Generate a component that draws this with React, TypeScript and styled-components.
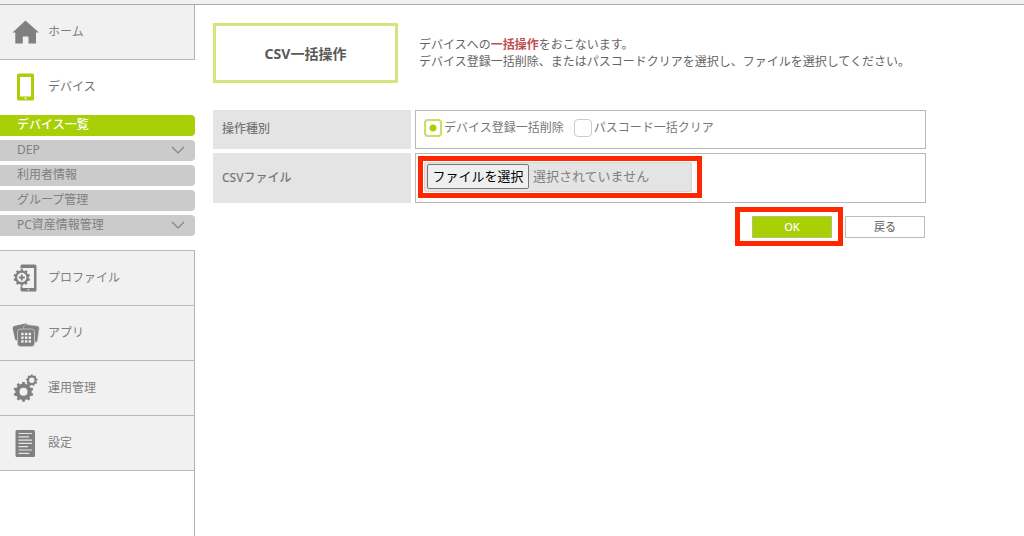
import React from 'react';
import styled, { createGlobalStyle } from 'styled-components';

const GlobalStyle = createGlobalStyle`
  * { box-sizing: border-box; }
  body {
    margin: 0;
    background: #fff;
    color: #777;
    font-family: "Noto Sans", "Noto Sans CJK JP", sans-serif;
    font-size: 12px;
  }
  button, input { font-family: inherit; }
`;

const Page = styled.div`
  display: flex;
  flex-direction: column;
  min-height: 100vh;
`;

const TopBar = styled.header`
  height: 5px;
  background: #f1f1f1;
  border-bottom: 1px solid #aaa;
`;

const Body = styled.div`
  display: flex;
  flex: 1;
`;

const Sidebar = styled.nav`
  display: flex;
  flex-direction: column;
  flex: 0 0 195px;
`;

const SidebarRest = styled.div`
  flex: 1;
  border-right: 1px solid #b0b0b0;
`;

const NavItem = styled.a<{ $open?: boolean }>`
  display: flex;
  align-items: center;
  gap: 8px;
  height: 55px;
  padding-left: 12px;
  color: ${(p) => (p.$open ? '#707070' : '#808080')};
  background: ${(p) => (p.$open ? '#fff' : '#f1f1f1')};
  border-right: 1px solid ${(p) => (p.$open ? 'transparent' : '#b0b0b0')};
  border-bottom: 1px solid ${(p) => (p.$open ? 'transparent' : '#b8b8b8')};
  text-decoration: none;
`;

const NavLabel = styled.span`
  padding-bottom: 1px;
  line-height: 18px;
`;

const NavGroup = styled.div`
  border-top: 1px solid #b8b8b8;
`;

const SubMenu = styled.ul`
  display: flex;
  flex-direction: column;
  gap: 4px;
  margin: 0 0 14px;
  padding: 0;
  list-style: none;
`;

const SubLink = styled.a<{ $active?: boolean }>`
  display: flex;
  align-items: center;
  justify-content: space-between;
  height: 21px;
  padding: 0 10px 2px 17px;
  border-radius: 0 4px 4px 0;
  color: ${(p) => (p.$active ? '#fff' : '#808080')};
  background: ${(p) => (p.$active ? '#a9cf06' : '#cbcbcb')};
  font-weight: ${(p) => (p.$active ? 500 : 400)};
  line-height: 18px;
  text-decoration: none;
`;

const Main = styled.main`
  flex: 1;
  min-width: 0;
  padding: 18px 98px 24px 18px;
`;

const Intro = styled.div`
  display: flex;
  gap: 21px;
  margin-bottom: 27px;
`;

const Title = styled.h1`
  display: flex;
  align-items: center;
  justify-content: center;
  flex: 0 0 185px;
  height: 60px;
  margin: 0;
  border: 3px solid #d4e57e;
  color: #595959;
  font-size: 14px;
  font-weight: 700;
`;

const Description = styled.p`
  margin: 0;
  padding-top: 13px;
  color: #666;
  line-height: 17px;
`;

const Emphasis = styled.strong`
  color: #bf5050;
  font-weight: 700;
`;

const Form = styled.form`
  display: flex;
  flex-direction: column;
  gap: 4px;
`;

const Row = styled.div<{ $height: number }>`
  display: grid;
  grid-template-columns: 198px 1fr;
  gap: 4px;
  min-height: ${(p) => p.$height}px;
`;

const RowTitle = styled.div`
  display: flex;
  align-items: center;
  padding: 0 9px 3px;
  background: #e4e4e4;
  color: #777;
  font-weight: 500;
`;

const RowField = styled.div`
  display: flex;
  align-items: center;
  gap: 10px;
  padding: 0 8px 3px;
  border: 1px solid #b8b8b8;
`;

const Choice = styled.label`
  display: flex;
  align-items: center;
  gap: 2px;
  line-height: 18px;
`;

const Radio = styled.input`
  appearance: none;
  width: 18px;
  height: 18px;
  margin: 0;
  border: 1px solid #ccc;
  border-radius: 4px;
  background: #fff;
  &:checked {
    border: 2px solid #c9e063;
    background: radial-gradient(circle, #a9cf06 3px, #fff 4px);
  }
`;

const Highlight = styled.span<{ $inset: string }>`
  position: absolute;
  inset: ${(p) => p.$inset};
  border: 5px solid #ff2600;
  pointer-events: none;
`;

const FileBox = styled.label`
  position: relative;
  display: flex;
  align-items: center;
  gap: 4px;
  width: 268px;
  height: 30px;
  padding: 2px;
  border: 1px solid #d6d6d6;
  border-radius: 2px;
  background: #e4e4e4;
  color: #808080;
  font-size: 13px;
  line-height: 18px;
  white-space: nowrap;
`;

const FileInput = styled.input`
  position: absolute;
  inset: 0;
  width: 100%;
  opacity: 0;
`;

const FilePick = styled.span`
  display: flex;
  align-items: center;
  justify-content: center;
  width: 102px;
  height: 25px;
  padding-bottom: 2px;
  border: 1px solid #777;
  border-radius: 2px;
  background: #efefef;
  color: #000;
`;

const FileStatus = styled.span`
  padding-bottom: 2px;
`;

const Actions = styled.div`
  display: flex;
  justify-content: flex-end;
  gap: 13px;
  padding: 9px 1px 0 0;
`;

const Marked = styled.div`
  position: relative;
`;

const ActionButton = styled.button<{ $primary?: boolean }>`
  display: block;
  width: 80px;
  height: 22px;
  padding: 0;
  border: 1px solid ${(p) => (p.$primary ? '#b5c46a' : '#bbb')};
  background: ${(p) => (p.$primary ? '#a9cf06' : '#fff')};
  color: ${(p) => (p.$primary ? '#fff' : '#707070')};
  font-size: 11px;
  font-weight: 500;
  line-height: 18px;
`;

const Icon = ({ children, color = '#808080' }: { children: React.ReactNode; color?: string }) => (
  <svg width="28" height="28" viewBox="0 0 28 28" fill={color} aria-hidden="true">
    {children}
  </svg>
);

const HomeIcon = () => (
  <Icon>
    <path d="M13.500 2.500 L27 14.500 H24 V25.500 H16.500 V18.500 H10.800 V25.500 H3.300 V14.500 H0.500 Z" />
  </Icon>
);

const DeviceIcon = () => (
  <Icon color="#a9cf06">
    <path
      fillRule="evenodd"
      d="M6.500 0.500 H20.500 Q22 0.500 22 2 V26 Q22 27.500 20.500 27.500 H6.500 Q5 27.500 5 26 V2 Q5 0.500 6.500 0.500 Z M8 4 V23.500 H19 V4 Z"
    />
    <circle cx="13.500" cy="25.400" r="0.900" fill="#fff" />
  </Icon>
);

/* Gear outline built from alternating inner and outer radii. */
const gearPath = (cx: number, cy: number, outer: number, inner: number, teeth: number) => {
  const step = (Math.PI * 2) / teeth;
  const points: string[] = [];
  for (let i = 0; i < teeth; i += 1) {
    const a = i * step - Math.PI / 2;
    [
      [-0.29, inner],
      [-0.21, outer],
      [0.21, outer],
      [0.29, inner],
    ].forEach(([offset, r]) => {
      const t = a + offset * step;
      points.push(`${(cx + r * Math.cos(t)).toFixed(2)} ${(cy + r * Math.sin(t)).toFixed(2)}`);
    });
  }
  return `M${points.join(' L')} Z`;
};

const ProfileIcon = () => (
  <Icon>
    <path
      fillRule="evenodd"
      d="M10 0.500 H23 Q24.500 0.500 24.500 2 V26 Q24.500 27.500 23 27.500 H10 Q8.500 27.500 8.500 26 V2 Q8.500 0.500 10 0.500 Z M10.500 4 V24 H22 V4 Z"
    />
    <circle cx="16.500" cy="25.800" r="0.800" fill="#f1f1f1" />
    <circle cx="9.800" cy="13.500" r="9" fill="#f1f1f1" />
    <path d={gearPath(9.8, 13.5, 8.4, 7, 10)} />
    <circle cx="9.800" cy="13.500" r="4.700" fill="#f1f1f1" />
    <path d="M9.800 10.500 V16.500 M6.800 13.500 H12.800" stroke="#808080" strokeWidth="1.800" />
  </Icon>
);

const AppsIcon = () => (
  <Icon>
    <path d="M2.200 7 L13.500 4.600 Q15 4.300 15.600 6 L17 18 L6 21.500 Q3.500 22 3 20 L0.700 9.500 Q0.300 7.500 2.200 7 Z" />
    <path
      d="M13.500 5.600 L25.500 7 Q27.300 7.400 27.200 9.200 L25.500 21.500 Q25.200 23.500 23 23.300 L14 22.500 L11.500 7.500 Z"
      stroke="#c4c4c4"
      strokeWidth="0.700"
    />
    <rect x="5.500" y="10" width="17" height="17.500" rx="3" stroke="#c4c4c4" strokeWidth="0.900" />
    {[13.8, 17.5, 21.2].map((y) =>
      [9.2, 12.9, 16.6].map((x) => (
        <rect key={`${x}-${y}`} x={x} y={y} width="2.400" height="2.400" fill="#f1f1f1" />
      )),
    )}
  </Icon>
);

const GearsIcon = () => (
  <Icon>
    <path fillRule="evenodd" d={`${gearPath(11.5, 17.8, 10, 8.2, 10)} M15.500 17.800 a4 4 0 1 0 -8 0 a4 4 0 1 0 8 0 Z`} />
    <path fillRule="evenodd" d={`${gearPath(19.8, 6.3, 5.8, 4.8, 9)} M22.500 6.300 a2.700 2.700 0 1 0 -5.400 0 a2.700 2.700 0 1 0 5.400 0 Z`} />
  </Icon>
);

const SettingsIcon = () => (
  <Icon>
    <rect x="3.500" y="1" width="19.500" height="27" rx="1.500" />
    <path
      d="M6.500 4.500 H20 M6.500 7.800 H17 M6.500 11.100 H20 M6.500 14.400 H20 M6.500 17.700 H16 M6.500 21 H20 M6.500 24.300 H17.500"
      stroke="#e4e4e4"
      strokeWidth="1.200"
    />
  </Icon>
);

const Chevron = () => (
  <svg width="14" height="8" viewBox="0 0 14 8" fill="none" stroke="#808080" strokeWidth="1.100" aria-hidden="true">
    <path d="M1 1 L7 7 L13 1" />
  </svg>
);

const subItems = [
  { label: 'デバイス一覧', active: true },
  { label: 'DEP', more: true },
  { label: '利用者情報' },
  { label: 'グループ管理' },
  { label: 'PC資産情報管理', more: true },
];

const lowerItems = [
  { label: 'プロファイル', icon: <ProfileIcon /> },
  { label: 'アプリ', icon: <AppsIcon /> },
  { label: '運用管理', icon: <GearsIcon /> },
  { label: '設定', icon: <SettingsIcon /> },
];

export default function App() {
  return (
    <Page>
      <GlobalStyle />
      <TopBar />
      <Body>
        <Sidebar>
          <NavItem href="#home">
            <HomeIcon />
            <NavLabel>ホーム</NavLabel>
          </NavItem>
          <NavItem href="#device" $open>
            <DeviceIcon />
            <NavLabel>デバイス</NavLabel>
          </NavItem>
          <SubMenu>
            {subItems.map((item) => (
              <li key={item.label}>
                <SubLink href="#device" $active={item.active}>
                  {item.label}
                  {item.more && <Chevron />}
                </SubLink>
              </li>
            ))}
          </SubMenu>
          <NavGroup>
            {lowerItems.map((item) => (
              <NavItem href="#section" key={item.label}>
                {item.icon}
                <NavLabel>{item.label}</NavLabel>
              </NavItem>
            ))}
          </NavGroup>
          <SidebarRest />
        </Sidebar>
        <Main>
          <Intro>
            <Title>CSV一括操作</Title>
            <Description>
              デバイスへの<Emphasis>一括操作</Emphasis>をおこないます。
              <br />
              デバイス登録一括削除、またはパスコードクリアを選択し、ファイルを選択してください。
            </Description>
          </Intro>
          <Form onSubmit={(e) => e.preventDefault()}>
            <Row $height={39} role="radiogroup" aria-labelledby="kind">
              <RowTitle id="kind">操作種別</RowTitle>
              <RowField>
                <Choice>
                  <Radio type="radio" name="kind" defaultChecked />
                  デバイス登録一括削除
                </Choice>
                <Choice>
                  <Radio type="radio" name="kind" />
                  パスコード一括クリア
                </Choice>
              </RowField>
            </Row>
            <Row $height={50}>
              <RowTitle id="csv">CSVファイル</RowTitle>
              <RowField>
                <FileBox>
                  <FilePick>ファイルを選択</FilePick>
                  <FileStatus>選択されていません</FileStatus>
                  <FileInput type="file" accept=".csv" aria-labelledby="csv" />
                  <Highlight $inset="-7px -11px -7px -7px" />
                </FileBox>
              </RowField>
            </Row>
            <Actions>
              <Marked>
                <ActionButton type="submit" $primary>
                  OK
                </ActionButton>
                <Highlight $inset="-9px -11px -8px -17px" />
              </Marked>
              <ActionButton type="button">戻る</ActionButton>
            </Actions>
          </Form>
        </Main>
      </Body>
    </Page>
  );
}
